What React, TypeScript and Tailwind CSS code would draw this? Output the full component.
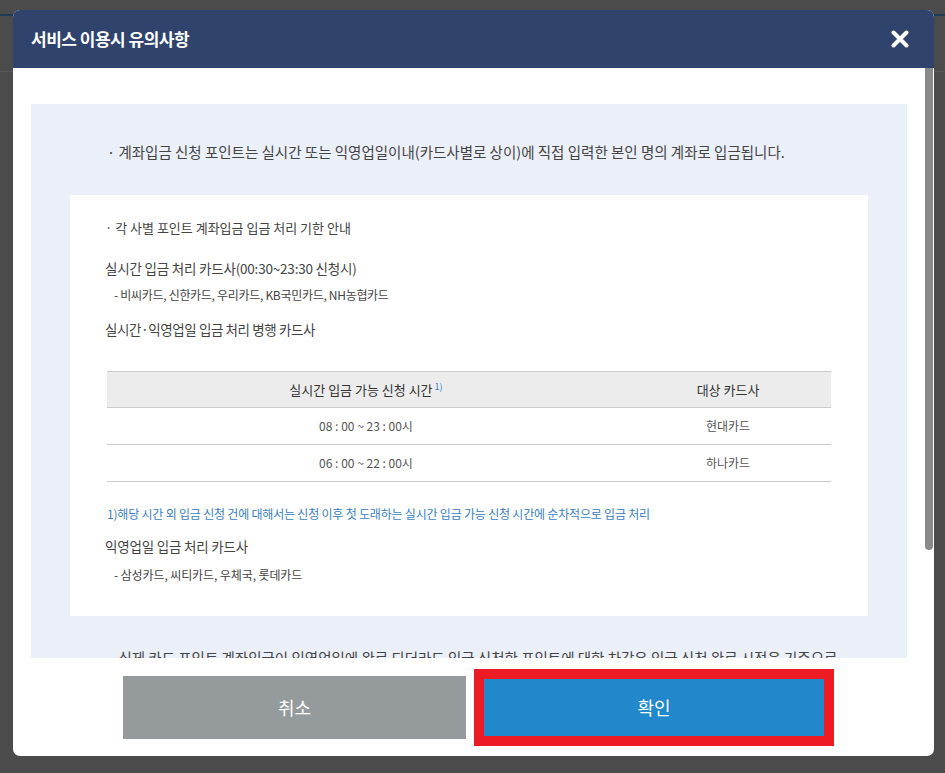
import React from "react";

const FONT = { fontFamily: '"Noto Sans CJK KR", "Noto Sans", sans-serif' };

const ROWS = [
  { time: "08 : 00 ~ 23 : 00시", card: "현대카드" },
  { time: "06 : 00 ~ 22 : 00시", card: "하나카드" },
];

function CloseIcon() {
  return (
    <svg width="18" height="18" viewBox="0 0 18 18" fill="none">
      <path d="M2.5 2.5 L15.5 15.5 M15.5 2.5 L2.5 15.5" stroke="#fff" strokeWidth="4" strokeLinecap="round" />
    </svg>
  );
}

export default function App() {
  return (
    <div className="relative h-[773px] w-[945px] overflow-hidden bg-[#4b4b4b]" style={FONT}>
      {/* page behind the dimmed overlay */}
      <div className="mt-[14px] h-[2px] bg-[#1e3a55]" />
      <div className="mt-[55px] h-px bg-[#585858]" />

      <div className="absolute left-[13px] top-[10px] flex h-[746px] w-[921px] flex-col overflow-hidden rounded-[7px] bg-white">
        <div className="flex h-[58px] shrink-0 items-center justify-between bg-[#2f436d] pl-[18px] pr-[25px]">
          <h2 className="text-[17px] font-bold tracking-[-0.5px] text-white">서비스 이용시 유의사항</h2>
          <CloseIcon />
        </div>

        <div className="flex h-[590px] shrink-0">
          <div className="flex-1 overflow-hidden px-[18px] pt-[36px]">
            <div className="bg-[#ebeff8] px-[39px] pt-[36px] pb-[40px] text-[#444]">
              <p className="pl-[37px] text-[14.5px] leading-[24px]">
                · 계좌입금 신청 포인트는 실시간 또는 익영업일이내(카드사별로 상이)에 직접 입력한 본인 명의 계좌로 입금됩니다.
              </p>

              <div className="mt-[31px] bg-white pl-[35px] pr-[37px] pt-[23px] pb-[32px]">
                <p className="text-[13px] leading-[20px]">· 각 사별 포인트 계좌입금 입금 처리 기한 안내</p>
                <p className="mt-[19px] text-[13.5px] leading-[22px] tracking-[-0.2px]">실시간 입금 처리 카드사(00:30~23:30 신청시)</p>
                <p className="mt-[7px] pl-[9px] text-[12px] leading-[18px] tracking-[-0.3px]">- 비씨카드, 신한카드, 우리카드, KB국민카드, NH농협카드</p>
                <p className="mt-[14px] text-[13.5px] leading-[22px] tracking-[-0.4px]">실시간·익영업일 입금 처리 병행 카드사</p>

                <table className="mt-[31px] ml-[2px] w-[724px] border-collapse text-center">
                  <thead>
                    <tr className="h-[36px] border-t border-b border-[#cccccc] bg-[#ececec]">
                      <th className="w-[518px] text-[13px] font-normal text-[#333]">
                        실시간 입금 가능 신청 시간<sup className="ml-[2px] text-[9px] text-[#3a7fc8]">1)</sup>
                      </th>
                      <th className="text-[13px] font-normal text-[#333]">대상 카드사</th>
                    </tr>
                  </thead>
                  <tbody>
                    {ROWS.map((r) => (
                      <tr key={r.card} className="h-[37px] border-b border-[#cccccc] text-[12px] text-[#555]">
                        <td>{r.time}</td>
                        <td>{r.card}</td>
                      </tr>
                    ))}
                  </tbody>
                </table>

                <p className="mt-[23px] ml-[2px] text-[12px] leading-[18px] tracking-[-0.2px] text-[#3a7fc8]">
                  1)해당 시간 외 입금 신청 건에 대해서는 신청 이후 첫 도래하는 실시간 입금 가능 신청 시간에 순차적으로 입금 처리
                </p>
                <p className="mt-[12px] text-[13.5px] leading-[22px] tracking-[-0.2px]">익영업일 입금 처리 카드사</p>
                <p className="mt-[9px] pl-[9px] text-[12px] leading-[18px] tracking-[-0.1px]">- 삼성카드, 씨티카드, 우체국, 롯데카드</p>
              </div>

              <p className="mt-[30px] pl-[37px] pr-[18px] text-[14.5px] leading-[24px]">
                · 실제 카드 포인트 계좌입금이 익영업일에 완료 되더라도 입금 신청한 포인트에 대한 차감은 입금 신청 완료 시점을 기준으로 합니다.
              </p>
            </div>
          </div>
          <div className="w-[9px] shrink-0 pr-px">
            <div className="h-[482px] rounded-b-[4px] bg-[#898989]" />
          </div>
        </div>

        <div className="flex flex-1 items-center gap-[8px] pl-[110px]">
          <button className="flex h-[63px] w-[343px] items-center justify-center bg-[#959a9d] text-[18px] text-white">
            취소
          </button>
          <div className="border-[10px] border-[#ed1c24]">
            <button className="flex h-[57px] w-[340px] items-center justify-center bg-[#2288cc] text-[18px] text-white">
              확인
            </button>
          </div>
        </div>
      </div>
    </div>
  );
}
